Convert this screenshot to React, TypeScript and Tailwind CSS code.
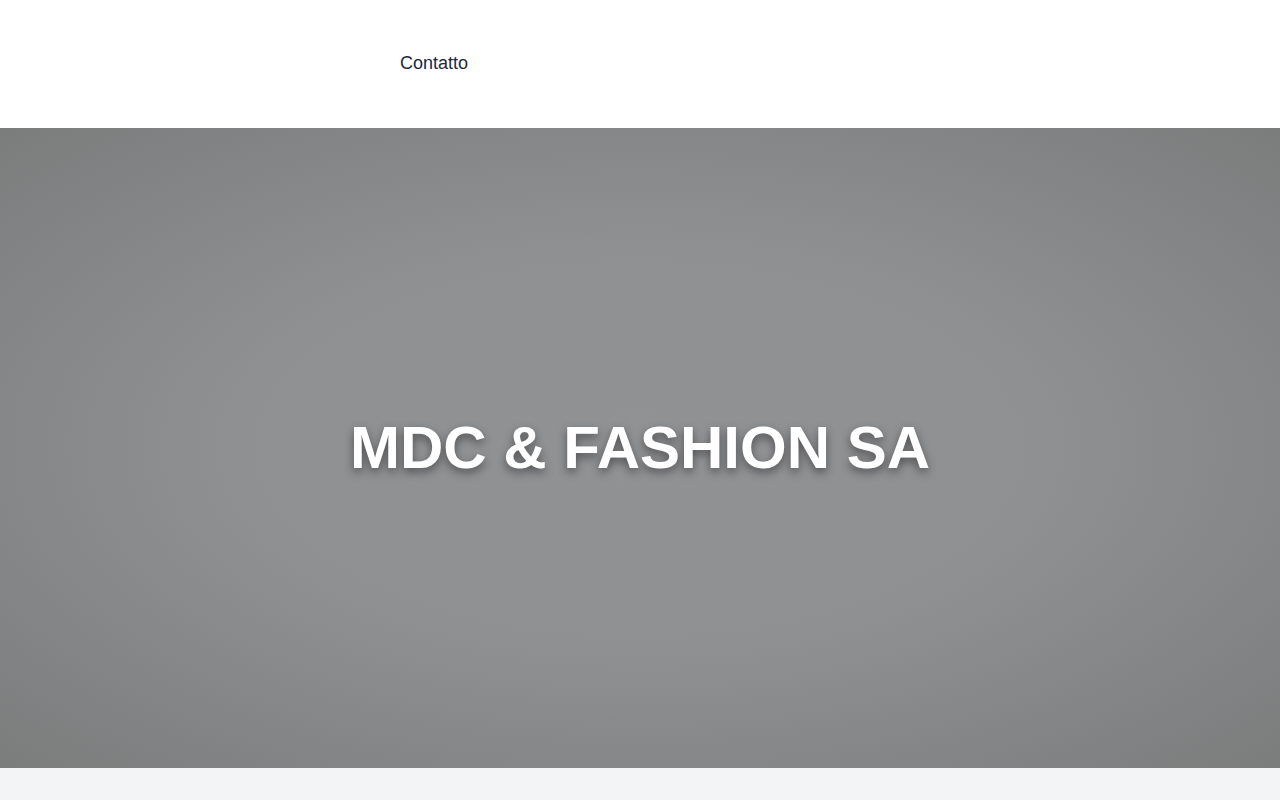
export default function App() {
  return (
    <div className="min-h-screen bg-gray-100 font-['Liberation_Sans',Arial,sans-serif]">
      <header className="flex h-32 items-center bg-white pb-0.5 pl-[400px]">
        <nav>
          <a href="#" className="text-lg text-gray-800">Contatto</a>
        </nav>
      </header>
      <section className="flex h-[640px] items-center justify-center bg-[radial-gradient(ellipse_at_center,#919294_0%,#8f9092_45%,#7b7c7c_100%)]">
        <h1 className="text-6xl font-bold text-white [text-shadow:0_4px_10px_rgba(0,0,0,0.45)]">MDC &amp; FASHION SA</h1>
      </section>
    </div>
  )
}
